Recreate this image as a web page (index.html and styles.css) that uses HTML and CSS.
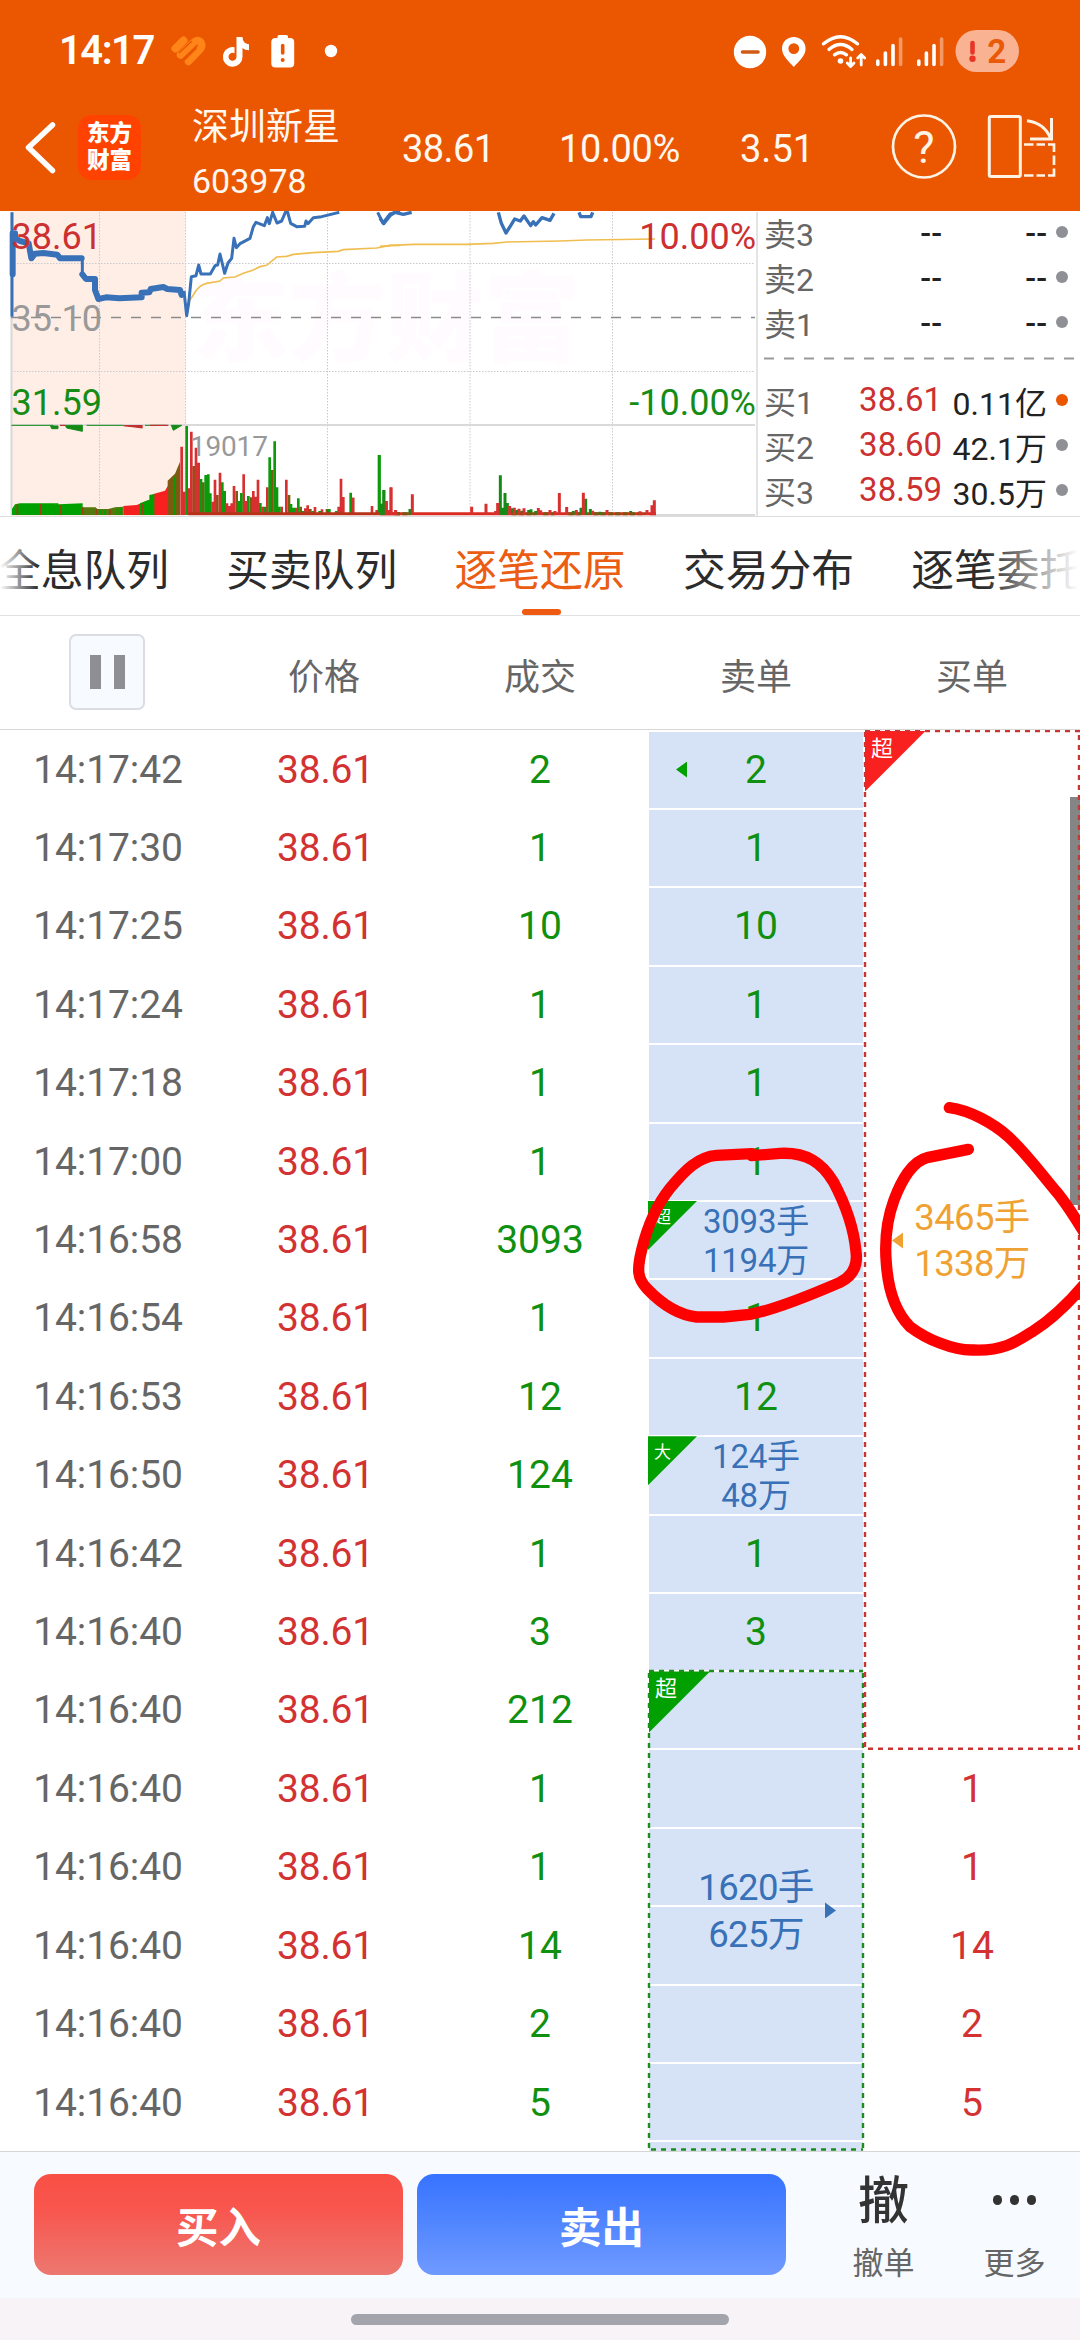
FILE: index.html
```html
<!DOCTYPE html>
<html lang="zh-CN">
<head>
<meta charset="utf-8">
<title>深圳新星 603978</title>
<link rel="stylesheet" href="styles.css">
</head>
<body>
<div class="app">
  <header class="top">
    <div class="status">
      <span class="clock">14:17</span>
      <svg class="status-left" viewBox="166 28 180 46" width="180" height="46">
        <g fill="none" stroke="#ff8519" stroke-width="7.5" stroke-linecap="round">
          <path d="M175.500 48.500L183.500 40.500" stroke-width="8"/>
          <path d="M180.500 55L193.500 42.500Q198 38.500 201 42.500Q203 46.500 199.500 50L188.500 61.500" stroke-linejoin="round"/>
        </g>
        <path d="M179 53L192 41" stroke="#eb5600" stroke-width="1.500"/><path d="M185 59.500L196.500 48" stroke="#eb5600" stroke-width="1.500"/>
        <path d="M236.500 37H242.500C242.800 41.500 245 43.800 249 44.300V50.300C246.500 50.200 244.300 49.400 242.500 48V57A9.800 9.800 0 1 1 234.500 47.300V53.300A4 4 0 1 0 236.500 57Z" fill="#fff"/>
        <path d="M277.500 38V36.500Q277.500 35 279 35H286.500Q288 35 288 36.500V38H290Q294.200 38 294.200 42V63.500Q294.200 67.500 290 67.500H275.500Q271.300 67.500 271.300 63.500V42Q271.300 38 275.500 38Z" fill="#fff"/>
        <path d="M282.700 45.500V53" stroke="#eb5600" stroke-width="3.600" stroke-linecap="round"/><circle cx="282.700" cy="60" r="2" fill="#eb5600"/>
        <circle cx="331" cy="51" r="6.200" fill="#fff"/>
      </svg>
      <svg class="status-right" viewBox="730 26 292 48" width="292" height="48">
        <circle cx="750" cy="51" r="16.200" fill="#fff"/><path d="M742.500 51H758" stroke="#d05a18" stroke-width="3.600" stroke-linecap="round"/>
        <path fill-rule="evenodd" d="M793.800 36C800.500 36 805.600 41 805.600 47.500C805.600 55 799 60 793.800 66C788.600 60 782 55 782 47.500C782 41 787.100 36 793.800 36ZM793.800 42.200A5.400 5.400 0 1 0 793.800 53A5.400 5.400 0 1 0 793.800 42.200Z" fill="#fff"/>
        <g fill="none" stroke="#fff" stroke-width="3.400" stroke-linecap="round">
          <path d="M823.500 42.800Q840.500 28.500 857.500 42.800"/><path d="M829 48.500Q840.500 38.500 852 48.500"/><path d="M834.500 53.800Q840.500 49 846.500 53.800"/>
          <path d="M850.600 57V65M847.200 62L850.600 65.500L854 62M861.200 64V54M857.700 57L861.200 53.500L864.700 57" stroke-width="2.800" stroke-linejoin="round"/>
        </g>
        <circle cx="840.500" cy="60" r="2.800" fill="#fff"/>
        <g stroke="#fff" stroke-width="3.600" stroke-linecap="round">
          <path d="M877.800 60V63.500M885.400 52V63.500M893 44.500V63.500M918.800 60V63.500M926.400 52V63.500M934 44.500V63.500"/>
          <path d="M900.600 38V63.500M941.600 38V63.500" opacity=".4"/>
        </g>
        <rect x="955.500" y="29" width="63.500" height="42" rx="21" fill="#fab392"/>
        <path d="M972.500 42V51.500" stroke="#e93528" stroke-width="4.600" stroke-linecap="round"/><circle cx="972.500" cy="57.800" r="3.200" fill="#e93528"/>
        <text x="996.800" y="62" text-anchor="middle" class="level">2</text>
      </svg>
    </div>
    <div class="title">
      <svg class="back" viewBox="20 112 40 70" width="40" height="70"><path d="M52.500 125L28.500 147.500L52.500 170.500" fill="none" stroke="#fff" stroke-width="5.500" stroke-linecap="round" stroke-linejoin="round"/></svg>
      <div class="logo"><span>东方</span><span>财富</span></div>
      <div class="stock"><span class="stock-name">深圳新星</span><span class="stock-code">603978</span></div>
      <span class="quote q1">38.61</span><span class="quote q2">10.00%</span><span class="quote q3">3.51</span>
      <svg class="actions" viewBox="888 110 172 76" width="172" height="76">
        <g fill="none" stroke="#fff3e6" stroke-width="2.700">
          <circle cx="924" cy="147.500" r="31"/>
          <rect x="989.300" y="117.500" width="31" height="60" rx="1.500" stroke-width="3"/>
          <path d="M1027 121.800Q1044 124 1050.500 139M1051.500 119V140H1030" stroke-width="3"/>
          <path d="M1024 145.500H1033.500M1036.500 145.500H1045M1048 145.500H1054V153M1054 156.500V166M1054 169.500V176.500H1048M1045 176.500H1036.500M1033.500 176.500H1024"/>
        </g>
        <text x="924" y="163.500" text-anchor="middle" class="help">?</text>
      </svg>
    </div>
  </header>

  <section class="market">
    <svg class="chart" viewBox="0 211 760 305" width="760" height="305">
      <rect x="11" y="211" width="174.500" height="305" fill="#ffeee6"/>
      <text x="192" y="353" class="watermark">东方财富</text>
      <g fill="none" stroke="#c9c9cf" stroke-dasharray="1.500 1.500">
        <path d="M11 263.500H755M11 371.500H755M99.500 212V515M185.500 212V515M327.500 212V515M470 212V515M612.500 212V515"/>
      </g>
      <path d="M11.500 212V515" stroke="#d8d8d8" stroke-width="2"/>
      <path d="M11 425H755M650 515H755" stroke="#dadada" stroke-width="2"/>
      <path d="M757 212V516" stroke="#c8c8c8"/>
      <path d="M11 317.600H755" stroke="#8c8c8c" stroke-width="1.500" stroke-dasharray="10 10"/>
      <g transform="translate(0 205) scale(.333333)" fill="none">
        <path d="M36 930V912L45 898L60 895H175V898L248 895V930Z" fill="#00a000"/>
        <path d="M248 930V907H287L292 912H325L345 907L370 905V930Z" fill="#55780f"/>
        <path d="M370 930V903L410 900L430 892L445 885V930Z" fill="#f42020"/>
        <path d="M420 930V895L448 884V870L465 866V930Z" fill="#00a000"/>
        <path d="M463 930V866L495 857L505 840V930Z" fill="#f92020"/>
        <path d="M503 930V827L525 806L540 770V930Z" fill="#7d5a12"/>
        <g stroke="#9b4014" stroke-width="5"><path d="M52 930V898M122 930V897M183 930V900M248 930V907M290 930V912M330 930V912M428 930V896"/></g>
        <g stroke="#00a000" stroke-width="5"><path d="M522 930V815M302 930V914M315 930V914M352 930V908M362 930V908"/></g>
        <path d="M34 661H160M152 663H174V671H155ZM196 661H247V679L200 669ZM260 661H370M435 661H500M514 661H545L520 676Z" stroke="#168a16" stroke-width="3" fill="#168a16"/>
        <path d="M180 661H196M370 662H426V668L398 665ZM450 661H505" stroke="#c33030" stroke-width="4" fill="#c33030"/>
        <g stroke="#7d5a12" stroke-width="8"><path d="M581 930V783M610 930V832M652 930V870M710 930V858M753 930V877M817 930V795M867 930V870M902 930V905M931 930V912M981 930V912M1059 930V878M1159 930V888"/></g>
        <g stroke="#d83030" stroke-width="8"><path d="M545 930V725M553 930V860M567 930V850M574 930V680M588 930V728M596 930V773M638 930V890M645 930V824M660 930V803M681 930V895M688 930V903M695 930V895M702 930V843M731 930V808M738 930V888M760 930V858M767 930V875M774 930V824M788 930V905M802 930V847M845 930V905M859 930V824M888 930V908M916 930V910M923 930V901M945 930V906M966 930V913M1016 930V905M1023 930V821M1030 930V876M1059 930V878M1116 930V903M1130 930V915M1166 930V915M1173 930V848M1187 930V915"/></g>
        <g stroke="#0c9a0c" stroke-width="8"><path d="M560 930V663M603 930V822M617 930V810M625 930V808M631 930V865M667 930V832M674 930V858M724 930V864M717 930V888M745 930V873M781 930V894M795 930V905M809 930V757M824 930V709M831 930V847M838 930V905M873 930V897M881 930V908M895 930V880M909 930V918M938 930V918M959 930V918M988 930V912M1009 930V918M1052 930V863M1137 930V750M1144 930V896M1151 930V855"/></g>
        <path d="M565 926H1200" stroke="#b63218" stroke-width="9"/>
        <path d="M558 330L566 290L580 270Q595 240 620 235L660 228L670 219L705 216L730 205L760 195L780 185L800 181L830 156L860 154L880 148L940 143L1015 139L1030 134L1130 129L1170 121H1200" stroke="#f0be50" stroke-width="5"/>
        <g stroke="#3871b7">
          <path d="M36 22V335M247 162V208M552 258L560 332L566 295L574 215L588 212L596 180L603 207L631 207L645 182L653 180L660 147L674 205L684 174L695 160L702 100L709 128L720 116L750 100L760 65L768 52L793 62L802 38L808 56L818 22L831 54L845 48L856 22H863L872 55L890 65L914 64L918 48L924 56L940 38L965 35L1018 22M1133 22L1149 54L1170 27L1200 18" stroke-width="9" stroke-linejoin="round"/>
          <path d="M38 85V208M45 85V100L60 108L86 115L94 160L105 146L130 144L172 149L180 160H245M247 208L258 222H285V255L295 282L318 277L358 280L425 277V263L448 262L452 252L490 246L502 252L540 255L545 270" stroke-width="18" stroke-linecap="round" stroke-linejoin="round"/>
        </g>
      </g>
      <g transform="translate(380 205) scale(.333333)" fill="none">
        <path d="M0 124L40 121L100 118H260L340 115L380 111L540 108L620 105L825 102" stroke="#f0be50" stroke-width="5"/>
        <path d="M0 40L11 56L32 30L45 22L70 28L95 22M355 22L364 55L378 84L392 62L404 42L421 48L432 33L452 62L460 50L467 60L486 38L510 46L522 25M597 22L602 35H633L638 22" stroke="#3871b7" stroke-width="10" stroke-linejoin="round"/>
        <path d="M0 926H828" stroke="#d92b20" stroke-width="9"/>
        <path d="M0 750V930" stroke="#0c9a0c" stroke-width="5"/>
        <g stroke="#168a16" stroke-width="9"><path d="M361 930V811M368 930V908M375 930V864M382 930V894M453 930V913M446 930V915M603 930V908M617 930V881M631 930V912M12 930V855M5 930V896M90 930V912M396 930V910M410 930V915M425 930V917M467 930V918M580 930V918M660 930V920M752 930V918"/></g>
        <path d="M45 926H90M395 926H465M490 926H525M565 926H605M640 926H795" stroke="#76590d" stroke-width="9" stroke-dasharray="15 7"/>
        <g stroke="#d83030" stroke-width="9"><path d="M19 930V888M33 930V847M47 930V915M97 930V868M275 930V905M318 930V896M347 930V918M353 930V894M389 930V903M403 930V908M417 930V911M432 930V910M475 930V909M482 930V916M510 930V915M525 930V918M538 930V864M560 930V906M589 930V915M610 930V863M638 930V917M681 930V915M780 930V919M801 930V915M816 930V901M823 930V886"/></g>
      </g>
      <g class="axis">
        <text x="11.500" y="248.500" class="up">38.61</text><text x="11.500" y="330.500" class="flat">35.10</text><text x="11.500" y="414.500" class="down">31.59</text>
        <text x="756" y="248.500" text-anchor="end" class="up">10.00%</text><text x="756" y="414.500" text-anchor="end" class="down">-10.00%</text>
        <text x="190" y="455.500" class="flat volume">19017</text>
      </g>
    </svg>
    <div class="book">
      <div class="side">
        <div class="level-row"><span>卖3</span><b class="none">--</b><b class="none">--</b><i></i></div>
        <div class="level-row"><span>卖2</span><b class="none">--</b><b class="none">--</b><i></i></div>
        <div class="level-row"><span>卖1</span><b class="none">--</b><b class="none">--</b><i></i></div>
      </div>
      <svg class="split" width="310" height="3"><path d="M0 1.500H310" stroke="#999" stroke-width="2" stroke-dasharray="10 10"/></svg>
      <div class="side">
        <div class="level-row"><span>买1</span><b class="price">38.61</b><b>0.11亿</b><i class="hot"></i></div>
        <div class="level-row"><span>买2</span><b class="price">38.60</b><b>42.1万</b><i></i></div>
        <div class="level-row"><span>买3</span><b class="price">38.59</b><b>30.5万</b><i></i></div>
      </div>
    </div>
  </section>

  <nav class="tabs"><span>全息队列</span><span>买卖队列</span><span class="active">逐笔还原</span><span>交易分布</span><span>逐笔委托</span></nav>

  <div class="head">
    <div><span class="pause"><i></i><i></i></span></div><div class="label">价格</div><div class="label">成交</div><div class="label">卖单</div><div class="label">买单</div>
  </div>

  <main class="ticks">
    <div class="t">14:17:42</div><div class="p">38.61</div><div class="v">2</div><div class="s"><i class="tri left green"></i>2</div>
    <div class="t">14:17:30</div><div class="p">38.61</div><div class="v">1</div><div class="s">1</div>
    <div class="t">14:17:25</div><div class="p">38.61</div><div class="v">10</div><div class="s">10</div>
    <div class="t">14:17:24</div><div class="p">38.61</div><div class="v">1</div><div class="s">1</div>
    <div class="t">14:17:18</div><div class="p">38.61</div><div class="v">1</div><div class="s">1</div>
    <div class="t">14:17:00</div><div class="p">38.61</div><div class="v">1</div><div class="s">1</div>
    <div class="t">14:16:58</div><div class="p">38.61</div><div class="v">3093</div><div class="s big"><em class="tag small">超</em>3093手<br>1194万</div>
    <div class="t">14:16:54</div><div class="p">38.61</div><div class="v">1</div><div class="s">1</div>
    <div class="t">14:16:53</div><div class="p">38.61</div><div class="v">12</div><div class="s">12</div>
    <div class="t">14:16:50</div><div class="p">38.61</div><div class="v">124</div><div class="s big"><em class="tag small">大</em>124手<br>48万</div>
    <div class="t">14:16:42</div><div class="p">38.61</div><div class="v">1</div><div class="s">1</div>
    <div class="t">14:16:40</div><div class="p">38.61</div><div class="v">3</div><div class="s">3</div>
    <div class="t">14:16:40</div><div class="p">38.61</div><div class="v">212</div>
    <div class="t">14:16:40</div><div class="p">38.61</div><div class="v">1</div><div class="b">1</div>
    <div class="t">14:16:40</div><div class="p">38.61</div><div class="v">1</div><div class="b">1</div>
    <div class="t">14:16:40</div><div class="p">38.61</div><div class="v">14</div><div class="b">14</div>
    <div class="t">14:16:40</div><div class="p">38.61</div><div class="v">2</div><div class="b">2</div>
    <div class="t">14:16:40</div><div class="p">38.61</div><div class="v">5</div><div class="b">5</div>
    <div class="merged sell-order"><em class="tag">超</em><i class="tri right"></i><span>1620手<br>625万</span></div>
    <div class="merged buy-order"><em class="tag red">超</em><i class="tri left"></i><span>3465手<br>1338万</span></div>
    <i class="thumb"></i>
    <svg class="marks" viewBox="620 730 460 1422" width="460" height="1422">
      <g fill="none" stroke-width="2.400" stroke-dasharray="5 5">
        <path d="M649 1671H863M649 1673V2150M863 1673V2150M651 2149.500H863" stroke="#1d8e1d"/>
        <path d="M865 731H1080M865 732V1749M1079 735V1749M868 1748.800H1080" stroke="#cc3434"/>
      </g>
      <g transform="translate(620 1080) scale(.333333)" fill="none" stroke="#f00" stroke-width="34" stroke-linecap="round" stroke-linejoin="round">
        <path d="M395 227L480 220C560 216 605 248 640 305C680 380 702 450 708 515C714 560 695 590 660 607C570 646 470 688 390 703L310 711H230C170 704 125 672 82 627C52 596 50 570 65 510C82 440 110 375 150 325C195 270 235 230 290 226L395 221"/>
        <path d="M1045 208L925 232C875 244 845 300 822 360C800 420 793 480 799 550C805 635 830 700 870 740C920 778 1000 812 1060 810C1150 814 1190 785 1240 753C1300 715 1350 665 1400 605"/>
        <path d="M988 83C1050 91 1120 130 1165 170C1220 220 1270 290 1315 342C1345 380 1370 420 1400 470"/>
      </g>
    </svg>
  </main>

  <footer class="trade">
    <div class="btn buy">买入</div><div class="btn sell">卖出</div>
    <div class="tool"><span class="glyph">撤</span><span>撤单</span></div>
    <div class="tool"><span class="dots"><i></i><i></i><i></i></span><span>更多</span></div>
  </footer>
  <div class="gesture"><i></i></div>
</div>
</body>
</html>
```
FILE: styles.css
```css
* { box-sizing: border-box; }
body { margin: 0; background: #fff; font-family: Roboto, "Noto Sans CJK SC", sans-serif; color: #222; }
i, em { font-style: normal; display: block; }
b { font-weight: 400; }
.app { width: 1080px; height: 2340px; display: flex; flex-direction: column; overflow: hidden; }

.top { height: 211px; background: #eb5600; color: #fff8f0; flex: none; }
.status { height: 100px; display: flex; align-items: center; padding: 2px 58px 0 58px; }
.clock { width: 108px; font-size: 40px; font-weight: 600; letter-spacing: -1.5px; color: #fff; line-height: 46px; padding-left: 1px; }
.status-right { margin-left: auto; }
.level { font: 700 33px Roboto, sans-serif; fill: #e85a08; }
.title { height: 111px; display: flex; align-items: center; padding: 0 20px 17px; }
.back { flex: none; }
.logo { width: 63px; height: 65px; margin-left: 18px; border-radius: 14px; background: #ff4200; color: #fff; font-weight: 900; font-size: 22.5px; line-height: 27px; display: flex; flex-direction: column; align-items: center; justify-content: center; }
.stock { width: 210px; margin-left: 51px; padding-top: 13px; display: flex; flex-direction: column; }
.stock-name { font-size: 37px; line-height: 54px; height: 54px; }
.stock-code { font-size: 34px; line-height: 52px; height: 52px; }
.quote { font-size: 38px; line-height: 50px; padding-top: 4px; }
.q1 { width: 157px; letter-spacing: -.6px; }
.q2 { width: 181px; letter-spacing: -.4px; }
.q3 { width: 148px; }
.actions { flex: none; }
.help { font: 400 45px Roboto, sans-serif; fill: #fff3e6; }

.market { height: 306px; flex: none; display: flex; border-bottom: 1px solid #ddd; }
.chart { flex: none; }
.watermark { font: 900 97px "Noto Sans CJK SC", sans-serif; fill: #fffbfe; }
.axis text { font-size: 36px; }
.axis .volume { font-size: 28px; letter-spacing: -.2px; }
.up { fill: #cc3030; } .flat { fill: #999; } .down { fill: #158c15; }
.book { width: 320px; padding: 0 12px 0 4px; display: flex; flex-direction: column; }
.level-row { display: grid; grid-template-columns: 90px 88px 105px 1fr; height: 45px; align-items: center; font-size: 32px; line-height: 44px; white-space: nowrap; }
.level-row span { color: #666; }
.level-row b { text-align: right; padding-top: 1px; }
.level-row .price { color: #cc3030; padding: 0 0 6px; font-size: 33px; }
.level-row .none { font-weight: 500; padding: 0 0 4px; }
.level-row i { width: 12px; height: 12px; border-radius: 50%; background: #8f9096; margin: -7px 0 0 9px; }
.level-row .hot { background: #eb5600; }
.split { margin: 11px 0 18px; flex: none; }

.tabs { height: 99px; flex: none; border-bottom: 1px solid #e2e2e2; display: flex; gap: 57.3px; text-indent: -2px; white-space: nowrap; font-size: 42.75px; line-height: 109px; color: #2c2c2c; position: relative; overflow: hidden; }
.tabs span { flex: none; width: 171px; position: relative; height: 98px; }
.tabs .active { color: #eb5d12; }
.tabs .active::after { content: ""; position: absolute; left: 65px; bottom: 0; width: 39px; height: 6px; border-radius: 3px; background: #ee5a12; }
.tabs::after { content: ""; position: absolute; inset: 0 0 1px; background: linear-gradient(90deg, #fff, #fff0 38px, #fff0 985px, #fff 1078px); }

.head { height: 114px; flex: none; border-bottom: 1px solid #d8d8d8; display: grid; grid-template-columns: repeat(5, 216px); align-items: center; text-align: center; font-size: 36px; color: #666; }
.label { padding-top: 3px; }
.pause { display: flex; width: 76px; height: 76px; margin: -2px auto 0 69px; border: 2px solid #dcdce4; border-radius: 7px; background: #f7faff; justify-content: center; align-items: center; gap: 13px; }
.pause i { width: 11px; height: 34px; background: #8e8f94; }

.ticks { height: 1421.5px; flex: none; position: relative; display: grid; grid-template-columns: repeat(5, 216px); grid-template-rows: repeat(18, 78.41px) 9px; padding-top: .6px; text-align: center; font-size: 39px; line-height: 78px; border-bottom: 1px solid #d5d5d5; }
.t { grid-column: 1; color: #666; letter-spacing: -.1px; }
.p { grid-column: 2; color: #d33232; letter-spacing: -.2px; padding-left: 3px; }
.v { grid-column: 3; color: #10900f; }
.s { grid-column: 4; color: #10900f; background: #d6e3f6; margin: 1px; position: relative; line-height: 76px; }
.b { grid-column: 5; color: #d33232; }
.s.big { color: #3871b7; font-size: 33px; line-height: 39px; letter-spacing: -.2px; margin-bottom: 0; border-bottom: 1px solid #fff; }
.merged { display: flex; align-items: center; justify-content: center; position: relative; font-size: 36.5px; line-height: 46.7px; letter-spacing: -.6px; }
.merged span { padding-top: 2px; }
.sell-order { grid-column: 4; grid-row: 13 / 20; margin: 0 1px; color: #3871b7; background: repeating-linear-gradient(#fff 0 1px, #d6e3f6 1px 77.41px, #fff 77.41px 78.41px); }
.buy-order { grid-column: 5; grid-row: 1 / 14; color: #efa233; }
.tag { position: absolute; left: 0; top: 0; width: 61px; height: 61px; padding: 5px 0 0 6px; font-size: 22px; line-height: 26px; letter-spacing: 0; text-align: left; color: #fff; background: #00a000; clip-path: polygon(0 0, 100% 0, 0 100%); }
.tag.red { left: 1px; background: #f92020; }
.tag.small { left: -1px; top: -1px; width: 49px; height: 49px; font-size: 17px; line-height: 20px; padding: 6px 0 0 6px; }
.tri { position: absolute; width: 11px; height: 16px; background: currentColor; top: 30px; left: 27px; }
.tri.left { clip-path: polygon(0 50%, 100% 0, 100% 100%); }
.tri.right { clip-path: polygon(0 0, 100% 50%, 0 100%); left: 176px; top: 231px; }
.tri.green { color: #00a000; }
.buy-order .tri { left: 28px; top: 502px; }
.thumb { position: absolute; left: 1070px; top: 67px; width: 10px; height: 408px; background: #858585; }
.marks { position: absolute; left: 620px; top: 0; }

.trade { height: 146px; flex: none; background: #f7faff; display: flex; padding: 22px 0 0 34px; }
.btn { width: 369px; height: 101px; border-radius: 17px; color: #fff; font-size: 42.5px; font-weight: 700; line-height: 110px; text-align: center; margin-right: 14px; }
.buy { background: linear-gradient(#f94f45, #f8564e 35%, #ec7870); }
.sell { background: linear-gradient(#3673ff, #6f9aff); }
.tool { width: 131px; display: flex; flex-direction: column; align-items: center; font-size: 31px; line-height: 30px; color: #666; padding-top: 3px; }
.tool:nth-child(3) { margin-left: 18px; }
.glyph { font-size: 51px; line-height: 50px; font-weight: 500; color: #333; height: 72px; }
.dots { display: flex; gap: 7.500px; height: 72px; padding-top: 18.5px; }
.dots i { width: 9.500px; height: 9.500px; border-radius: 50%; background: #333; }
.gesture { height: 43px; flex: none; background: #f7f3f6; padding-top: 16px; }
.gesture i { width: 378px; height: 11px; border-radius: 6px; background: #a3a4ac; margin: 0 auto; }
```
